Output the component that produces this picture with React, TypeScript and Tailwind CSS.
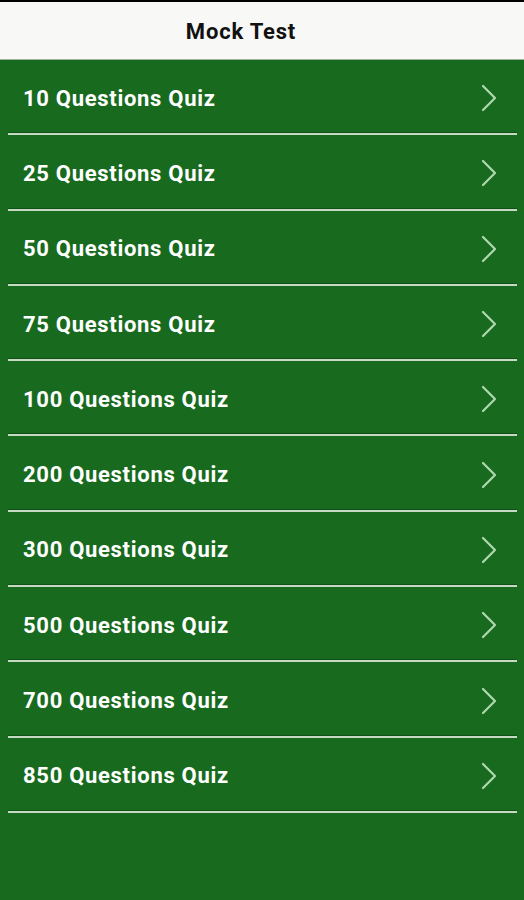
import React from "react";

const items = [10, 25, 50, 75, 100, 200, 300, 500, 700, 850];

function Chevron() {
  return (
    <svg width="18" height="28" viewBox="0 0 18 28" fill="none">
      <path d="M3 2 L15 14 L3 26" stroke="#b0d8ae" strokeWidth="2.2" strokeLinecap="round" strokeLinejoin="round" />
    </svg>
  );
}

export default function App() {
  return (
    <div className="w-[524px] h-[900px] bg-[#186a1e] flex flex-col overflow-hidden" style={{ fontFamily: "Roboto, 'Liberation Sans', sans-serif" }}>
      <div className="h-[2px] bg-black" />
      <div className="h-[58px] bg-[#f8f8f6] flex items-center justify-center pr-[42px] pt-[2px] border-b border-[#9fb59f]">
        <span className="text-[22px] font-bold text-[#111] tracking-[0.8px]">Mock Test</span>
      </div>
      <div className="flex flex-col">
        {items.map((n) => (
          <div key={n} className="flex flex-col">
            <div className="h-[73.3px] flex items-center justify-between pl-[23px] pr-[26px] pt-[3px]">
              <span className="text-[22px] font-bold text-white tracking-[0.7px]">{n} Questions Quiz</span>
              <Chevron />
            </div>
            <div className="mx-[8px] mr-[7px] h-[2px] bg-[#c6d9c2] shadow-[0_-1px_0_#0f5014]" />
          </div>
        ))}
      </div>
    </div>
  );
}
